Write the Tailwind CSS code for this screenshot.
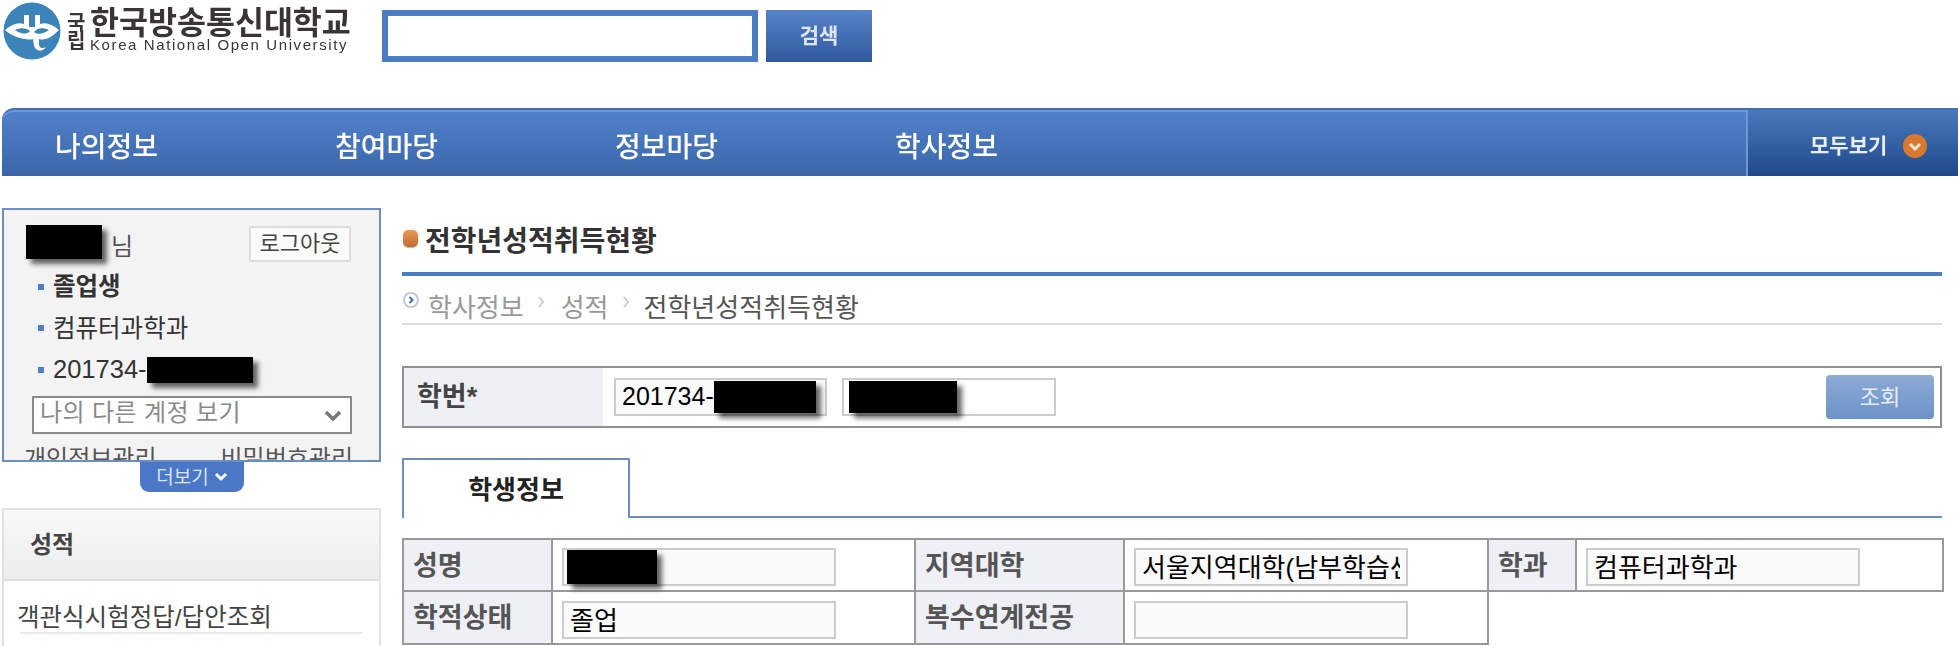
<!DOCTYPE html>
<html lang="ko">
  <head>
    <meta charset="utf-8" />
    <title>전학년성적취득현황</title>
    <script src="https://cdn.jsdelivr.net/npm/@tailwindcss/browser@4"></script>
  </head>
  <body class="bg-white">
    <div class="w-[1958px] h-[646px] overflow-hidden bg-white text-[#333] font-['Liberation_Sans','Noto_Sans_CJK_KR',sans-serif]">
      <!-- header -->
      <header class="flex h-[108px] items-start">
        <div class="flex w-[382px] items-start pl-[3px] pt-[2px]">
          <svg class="w-[58px] h-[58px] shrink-0 blur-[0.4px]" viewBox="0 0 58 58">
            <circle cx="29" cy="29" r="28.5" fill="#3a84b9" />
            <path d="M2 28 C9 22 15 20 21 22 L21 13 L26 13 L26 25 L32 25 L32 13 L37 13 L37 22 C43 20 49 22 56 28 C49 35 43 39 36 37 L36 42 C36 46 39 47 43 45 C40 50 33 50 31 44 L30 37 C24 39 9 35 2 28 Z" fill="#fff" />
            <path d="M12 28 C18 25 24 26 27 29 C24 33 17 32 12 28 Z" fill="#3a84b9" />
            <path d="M46 28 C40 25 34 26 31 30 C34 33 41 32 46 28 Z" fill="#3a84b9" />
          </svg>
          <div class="flex ml-[6px] mt-[8px] text-[#3a3434] blur-[0.4px]">
            <div class="w-[23px] mt-[4px] text-[20px] leading-[18px] font-bold">국<br />립</div>
            <div class="flex flex-col">
              <div class="text-[31.5px] leading-[26px] font-bold whitespace-nowrap">한국방송통신대학교</div>
              <div class="text-[15px] leading-[14px] mt-[2px] whitespace-nowrap font-medium tracking-[1.6px]">Korea National Open University</div>
            </div>
          </div>
        </div>
        <div class="flex mt-[10px] gap-2">
          <input class="w-[376px] h-[52px] bg-white border-[6px] border-[#4b7dc5] outline-none" />
          <button class="w-[106px] h-[52px] bg-linear-to-b from-[#5683ca] to-[#325a9d] text-[#dfe6f3] text-[21px] font-bold blur-[0.3px]">검색</button>
        </div>
      </header>

      <!-- main nav -->
      <nav class="flex h-[68px] ml-[2px] rounded-tl-[12px] overflow-hidden border-t-2 border-[#4270b5] bg-linear-to-b from-[#5282cc] to-[#3a66a9] text-white shadow-[inset_0_2px_0_#6d97d6]">
        <ul class="flex flex-1 pl-[53px] text-[28px] font-medium leading-[76px] blur-[0.3px]">
          <li class="w-[280px]">나의정보</li>
          <li class="w-[280px]">참여마당</li>
          <li class="w-[280px]">정보마당</li>
          <li class="w-[280px]">학사정보</li>
        </ul>
        <div class="flex w-[212px] items-center pl-[62px] pt-[6px] border-l-2 border-[#6d97d6] bg-linear-to-b from-[#4a78ba] to-[#1e4a8c]">
          <span class="text-[21px] font-bold text-[#e9eef6] blur-[0.3px]">모두보기</span>
          <svg class="w-[24px] h-[24px] ml-[16px]" viewBox="0 0 24 24">
            <circle cx="12" cy="12" r="12" fill="#d9792f" />
            <path d="M7 10 L12 15 L17 10" fill="none" stroke="#f7e6d4" stroke-width="3" />
          </svg>
        </div>
      </nav>

      <div class="flex mt-[32px] ml-[2px]">
        <!-- sidebar -->
        <aside class="w-[379px] shrink-0">
          <div class="h-[254px] overflow-hidden bg-[#f3f3f3] border-2 border-[#6b8fc2] pl-[14px] pr-[28px]">
            <div class="flex items-start h-[56px] pt-[15px] pl-[8px]">
              <span class="w-[76px] h-[34px] bg-black shadow-[5px_5px_5px_rgba(0,0,0,0.6)]"></span>
              <span class="ml-[9px] mt-[5px] text-[24px] leading-[34px] text-[#555]">님</span>
              <button class="ml-auto mt-[1px] w-[102px] h-[36px] bg-[#fafafa] border-2 border-[#ddd] text-[22px] leading-[30px] text-[#444]">로그아웃</button>
            </div>
            <ul class="pl-[20px] text-[24.5px] leading-[41px] text-[#333]">
              <li class="flex items-center h-[41.5px] font-bold"><i class="w-[6px] h-[6px] bg-[#4f7fc6] mr-[9px]"></i>졸업생</li>
              <li class="flex items-center h-[41.5px]"><i class="w-[6px] h-[6px] bg-[#4f7fc6] mr-[9px]"></i>컴퓨터과학과</li>
              <li class="flex items-center h-[41.5px] text-[25.5px]"><i class="w-[6px] h-[6px] bg-[#4f7fc6] mr-[9px]"></i>201734-<span class="w-[106px] h-[26px] bg-black shadow-[5px_5px_5px_rgba(0,0,0,0.6)]"></span></li>
            </ul>
            <div class="relative ml-[14px] mt-[5px] w-[320px] h-[38px] bg-white border-2 border-[#8a8a8a] pl-[6px] text-[24px] leading-[30px] text-[#8a8a8a] tracking-[0.4px]">
              나의 다른 계정 보기
              <svg class="absolute right-[8px] top-[12px] w-[18px] h-[12px]" viewBox="0 0 18 12">
                <path d="M2 2 L9 9 L16 2" fill="none" stroke="#777" stroke-width="3.5" />
              </svg>
            </div>
            <div class="flex mt-[10px] ml-[6px] text-[24px] leading-[30px] text-[#555] whitespace-nowrap">
              <span>개인정보관리</span>
              <span class="w-[1px] h-[16px] mt-[8px] ml-[33px] mr-[31px] bg-[#aaa]"></span>
              <span>비밀번호관리</span>
            </div>
          </div>
          <button class="flex items-center justify-center gap-[5px] ml-[138px] w-[104px] h-[30px] rounded-b-[9px] bg-[#4a77c6] text-[#dce6f6] text-[19px] leading-none">
            더보기
            <svg class="w-[14px] h-[10px]" viewBox="0 0 14 10">
              <path d="M2 2 L7 7 L12 2" fill="none" stroke="#fff" stroke-width="3" />
            </svg>
          </button>
          <div class="mt-[16px] h-[200px] border-x-2 border-t-2 border-[#e2e2e2]">
            <h3 class="h-[71px] border-b-2 border-[#ddd] bg-linear-to-b from-[#f9f9f9] to-[#ececec] pl-[26px] text-[24px] font-bold leading-[70px] text-[#444]">성적</h3>
            <div class="mx-[16px] pt-[22px] border-b-2 border-[#eaeaea] text-[24.5px] leading-[29px] text-[#444]"><span class="-ml-[3px]">객관식시험정답/답안조회</span></div>
          </div>
        </aside>

        <!-- content -->
        <main class="w-[1540px] ml-[21px]">
          <div class="flex items-center h-[68px] border-b-4 border-[#4a7dc4]">
            <i class="w-[15px] h-[17px] ml-[1px] mt-[-3px] rounded-[5px] bg-linear-to-b from-[#ea9a5a] to-[#c5692a] shadow-[0_1px_1px_rgba(0,0,0,0.3)]"></i>
            <h2 class="ml-[7px] mt-[4px] text-[28px] font-bold text-[#333]">전학년성적취득현황</h2>
          </div>
          <div class="flex items-center h-[49px] border-b-2 border-[#ddd] text-[26px] text-[#999] pt-[18px]">
            <svg class="w-[16px] h-[16px] ml-[1px] mt-[-18px]" viewBox="0 0 16 16">
              <circle cx="8" cy="8" r="7" fill="#fff" stroke="#c4c8d4" stroke-width="2" />
              <path d="M6.5 5 L9.5 8 L6.5 11" fill="none" stroke="#3f6fb8" stroke-width="2" />
            </svg>
            <span class="ml-[9px]">학사정보</span>
            <svg class="w-[8px] h-[12px] ml-[13px] mt-[-14px]" viewBox="0 0 8 12"><path d="M2 1 L6 6 L2 11" fill="none" stroke="#ccc" stroke-width="2" /></svg>
            <span class="ml-[16px]">성적</span>
            <svg class="w-[8px] h-[12px] ml-[13px] mt-[-14px]" viewBox="0 0 8 12"><path d="M2 1 L6 6 L2 11" fill="none" stroke="#ccc" stroke-width="2" /></svg>
            <span class="ml-[14px] text-[#555]">전학년성적취득현황</span>
          </div>

          <!-- search form -->
          <div class="flex mt-[41px] h-[62px] border-2 border-[#919191]">
            <div class="flex items-center w-[199px] bg-[#eef0f5] pl-[13px] text-[27px] font-bold text-[#444]">학번*</div>
            <div class="flex items-center flex-1 pl-[11px] pr-[6px] gap-[15px]">
              <div class="flex items-center w-[213px] h-[38px] bg-[#fafafa] border-2 border-[#ccc] pl-[6px] text-[25px] text-black">201734-<span class="w-[102px] h-[32px] bg-black shadow-[5px_5px_5px_rgba(0,0,0,0.6)]"></span></div>
              <div class="flex items-center w-[214px] h-[38px] bg-white border-2 border-[#ccc] pl-[5px]"><span class="w-[108px] h-[32px] bg-black shadow-[5px_5px_5px_rgba(0,0,0,0.6)]"></span></div>
              <button class="ml-auto w-[108px] h-[44px] rounded-[4px] bg-linear-to-b from-[#8dabd5] to-[#6c93c8] text-[#e8eef7] text-[22px]">조회</button>
            </div>
          </div>

          <!-- tabs -->
          <div class="flex mt-[30px] h-[60px] border-b-2 border-[#6b8fc2]">
            <div class="w-[228px] h-[60px] bg-white border-x-2 border-t-2 border-[#6b8fc2] text-center text-[26px] font-bold leading-[60px] text-[#222]">학생정보</div>
          </div>

          <!-- student info -->
          <table class="mt-[20px] w-[1540px] table-fixed text-[27px]">
            <colgroup>
              <col class="w-[149px]" /><col class="w-[363px]" /><col class="w-[209px]" /><col class="w-[364px]" /><col class="w-[88px]" /><col class="w-[367px]" />
            </colgroup>
            <tbody>
              <tr class="h-[52px]">
                <th class="border-2 border-[#999] bg-[#eef0f5] pl-[9px] pt-[2px] text-left text-[#555] font-bold">성명</th>
                <td class="border-2 border-[#999] pl-[9px] pt-[4px]">
                  <div class="flex items-center w-[274px] h-[38px] bg-[#fafafa] border-2 border-[#ccc] pl-[3px]"><span class="w-[90px] h-[34px] bg-black shadow-[5px_5px_5px_rgba(0,0,0,0.6)]"></span></div>
                </td>
                <th class="border-2 border-[#999] bg-[#eef0f5] pl-[9px] pt-[2px] text-left text-[#555] font-bold">지역대학</th>
                <td class="border-2 border-[#999] pl-[9px] pt-[4px]">
                  <input readonly value="서울지역대학(남부학습센터)" class="block w-[274px] h-[38px] bg-[#fafafa] border-2 border-[#ccc] px-[6px] pt-[3px] text-[26px] text-black outline-none" />
                </td>
                <th class="border-2 border-[#999] bg-[#eef0f5] pl-[9px] pt-[2px] text-left text-[#555] font-bold">학과</th>
                <td class="border-2 border-[#999] pl-[9px] pt-[4px]">
                  <input readonly value="컴퓨터과학과" class="block w-[274px] h-[38px] bg-[#fafafa] border-2 border-[#ccc] px-[6px] pt-[3px] text-[26px] text-black outline-none" />
                </td>
              </tr>
              <tr class="h-[53px]">
                <th class="border-2 border-[#999] bg-[#eef0f5] pl-[9px] pt-[2px] text-left text-[#555] font-bold">학적상태</th>
                <td class="border-2 border-[#999] pl-[9px] pt-[4px]">
                  <input readonly value="졸업" class="block w-[274px] h-[38px] bg-[#fafafa] border-2 border-[#ccc] px-[6px] pt-[3px] text-[26px] text-black outline-none" />
                </td>
                <th class="border-2 border-[#999] bg-[#eef0f5] pl-[9px] pt-[2px] text-left text-[#555] font-bold">복수연계전공</th>
                <td class="border-2 border-[#999] pl-[9px] pt-[4px]">
                  <input readonly value="" class="block w-[274px] h-[38px] bg-[#fafafa] border-2 border-[#ccc] px-[6px] text-[26px] outline-none" />
                </td>
              </tr>
            </tbody>
          </table>
        </main>
      </div>
    </div>
  </body>
</html>
